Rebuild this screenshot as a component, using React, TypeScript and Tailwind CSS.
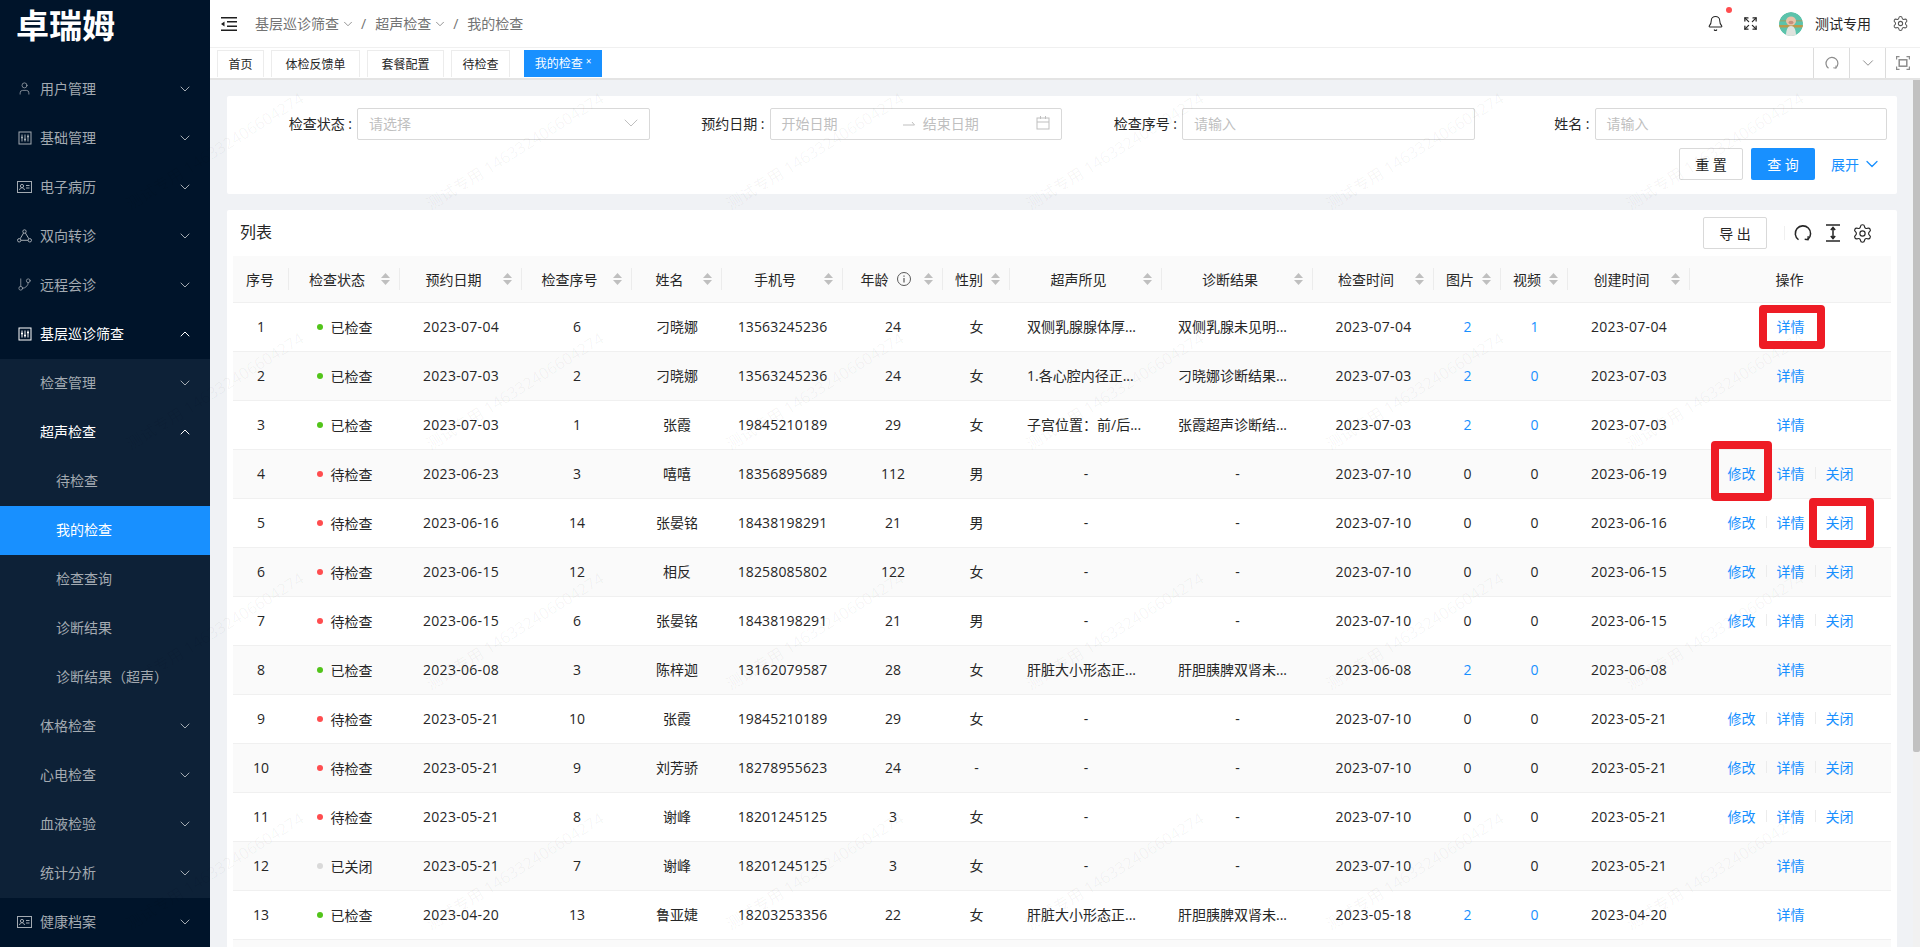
import { Bell, ChevronDown, ChevronUp, Expand, GitBranch, Settings, User } from "lucide-react";

type Row = {
  id: number;
  status: "done" | "wait" | "closed";
  date: string;
  no: number;
  name: string;
  phone: string;
  age: string;
  sex: string;
  finding: string;
  result: string;
  checkTime: string;
  pics: number;
  videos: number;
  created: string;
};

const rows: Row[] = [
  { id: 1, status: "done", date: "2023-07-04", no: 6, name: "刁晓娜", phone: "13563245236", age: "24", sex: "女", finding: "双侧乳腺腺体厚...", result: "双侧乳腺未见明...", checkTime: "2023-07-04", pics: 2, videos: 1, created: "2023-07-04" },
  { id: 2, status: "done", date: "2023-07-03", no: 2, name: "刁晓娜", phone: "13563245236", age: "24", sex: "女", finding: "1.各心腔内径正...", result: "刁晓娜诊断结果...", checkTime: "2023-07-03", pics: 2, videos: 0, created: "2023-07-03" },
  { id: 3, status: "done", date: "2023-07-03", no: 1, name: "张霞", phone: "19845210189", age: "29", sex: "女", finding: "子宫位置：前/后...", result: "张霞超声诊断结...", checkTime: "2023-07-03", pics: 2, videos: 0, created: "2023-07-03" },
  { id: 4, status: "wait", date: "2023-06-23", no: 3, name: "嘻嘻", phone: "18356895689", age: "112", sex: "男", finding: "-", result: "-", checkTime: "2023-07-10", pics: 0, videos: 0, created: "2023-06-19" },
  { id: 5, status: "wait", date: "2023-06-16", no: 14, name: "张晏铭", phone: "18438198291", age: "21", sex: "男", finding: "-", result: "-", checkTime: "2023-07-10", pics: 0, videos: 0, created: "2023-06-16" },
  { id: 6, status: "wait", date: "2023-06-15", no: 12, name: "相反", phone: "18258085802", age: "122", sex: "女", finding: "-", result: "-", checkTime: "2023-07-10", pics: 0, videos: 0, created: "2023-06-15" },
  { id: 7, status: "wait", date: "2023-06-15", no: 6, name: "张晏铭", phone: "18438198291", age: "21", sex: "男", finding: "-", result: "-", checkTime: "2023-07-10", pics: 0, videos: 0, created: "2023-06-15" },
  { id: 8, status: "done", date: "2023-06-08", no: 3, name: "陈梓迦", phone: "13162079587", age: "28", sex: "女", finding: "肝脏大小形态正...", result: "肝胆胰脾双肾未...", checkTime: "2023-06-08", pics: 2, videos: 0, created: "2023-06-08" },
  { id: 9, status: "wait", date: "2023-05-21", no: 10, name: "张霞", phone: "19845210189", age: "29", sex: "女", finding: "-", result: "-", checkTime: "2023-07-10", pics: 0, videos: 0, created: "2023-05-21" },
  { id: 10, status: "wait", date: "2023-05-21", no: 9, name: "刘芳骄", phone: "18278955623", age: "24", sex: "-", finding: "-", result: "-", checkTime: "2023-07-10", pics: 0, videos: 0, created: "2023-05-21" },
  { id: 11, status: "wait", date: "2023-05-21", no: 8, name: "谢峰", phone: "18201245125", age: "3", sex: "女", finding: "-", result: "-", checkTime: "2023-07-10", pics: 0, videos: 0, created: "2023-05-21" },
  { id: 12, status: "closed", date: "2023-05-21", no: 7, name: "谢峰", phone: "18201245125", age: "3", sex: "女", finding: "-", result: "-", checkTime: "2023-07-10", pics: 0, videos: 0, created: "2023-05-21" },
  { id: 13, status: "done", date: "2023-04-20", no: 13, name: "鲁亚婕", phone: "18203253356", age: "22", sex: "女", finding: "肝脏大小形态正...", result: "肝胆胰脾双肾未...", checkTime: "2023-05-18", pics: 2, videos: 0, created: "2023-04-20" },
];

const statusText = { done: "已检查", wait: "待检查", closed: "已关闭" };

function SlidersIcon() {
  return (
    <svg width="14" height="14" viewBox="0 0 14 14" fill="none" stroke="currentColor" strokeWidth="1">
      <rect x="1" y="1" width="12" height="12" />
      <path d="M4 3.5v7M7 3.5v7M10 3.5v7" />
      <path d="M3 6.5h2M6 8.5h2M9 5.5h2" strokeWidth="1.6" />
    </svg>
  );
}

function CardIcon() {
  return (
    <svg width="15" height="12" viewBox="0 0 15 12" fill="none" stroke="currentColor" strokeWidth="1">
      <rect x="0.5" y="0.5" width="14" height="11" />
      <circle cx="5" cy="5" r="1.6" />
      <path d="M2.5 9c.3-1.6 1.3-2.2 2.5-2.2S7.200 7.400 7.500 9M9 4.500h3.500M9 7h3.500" />
    </svg>
  );
}

function NodesIcon() {
  return (
    <svg width="15" height="14" viewBox="0 0 15 14" fill="none" stroke="currentColor" strokeWidth="1">
      <circle cx="7.500" cy="2.500" r="1.700" />
      <circle cx="2.200" cy="11.300" r="1.700" />
      <circle cx="12.800" cy="11.300" r="1.700" />
      <path d="M6.600 4 3.100 9.800M8.400 4l3.500 5.800M3.900 11.300h7.200" />
    </svg>
  );
}

function RefreshIcon({ size }: { size: number }) {
  return (
    <svg width={size} height={size} viewBox="0 0 20 20" fill="none" stroke="currentColor" strokeWidth="1.700">
      <path d="M5 17.500A8.500 8.500 0 1 1 15.500 17" />
      <path d="M15.800 13.500 15.500 17.500l-3.600-.6" strokeWidth="1.500" />
    </svg>
  );
}

function SortIcon() {
  return (
    <svg width="9" height="12" viewBox="0 0 9 12" className="ml-[4px] shrink-0 fill-[#bfbfbf]">
      <path d="M4.500 0 9 5H0z" />
      <path d="M0 7h9l-4.500 5z" />
    </svg>
  );
}

function Pig() {
  return (
    <svg width="24" height="24" viewBox="0 0 24 24" className="rounded-full">
      <circle cx="12" cy="12" r="12" fill="#5cc3ab" />
      <rect x="0" y="13" width="24" height="2.500" fill="#b99a4c" />
      <rect x="0" y="8" width="24" height="1.500" fill="#a89a5c" opacity="0.6" />
      <ellipse cx="12" cy="9" rx="5" ry="4.500" fill="#e8c2a8" />
      <ellipse cx="12" cy="10.500" rx="2.500" ry="1.700" fill="#c78f7c" />
      <path d="M7 24c0-7 2-10 5-10s5 3 5 10z" fill="#dfe3de" />
    </svg>
  );
}

function MenuItem({
  label,
  icon,
  indent,
  arrow,
  active,
  selected,
}: {
  label: string;
  icon?: React.ReactNode;
  indent?: boolean;
  arrow?: "up" | "down";
  active?: boolean;
  selected?: boolean;
}) {
  return (
    <div
      className={`relative flex h-[49px] items-center pb-[2px] pr-[17px] text-[14px] ${indent ? "pl-[56px]" : "pl-[40px]"} ${
        selected ? "bg-[#1890ff] text-white" : active ? "text-white" : "text-[#a3aab1]"
      }`}
    >
      {icon && <span className="absolute left-[17px] flex w-[15px] items-center justify-center">{icon}</span>}
      <span className="flex-1">{label}</span>
      {arrow === "down" && <ChevronDown size={16} strokeWidth={1.500} />}
      {arrow === "up" && <ChevronUp size={16} strokeWidth={1.500} />}
    </div>
  );
}

function Sidebar() {
  return (
    <aside className="flex w-[210px] shrink-0 flex-col bg-[#00142a]">
      <div className="flex h-[65px] items-start pl-[16px] pt-[4px] text-[33px] font-bold leading-[44px] text-white">卓瑞姆</div>
      <MenuItem label="用户管理" arrow="down" icon={<User size={19} strokeWidth={1.200} />} />
      <MenuItem label="基础管理" arrow="down" icon={<SlidersIcon />} />
      <MenuItem label="电子病历" arrow="down" icon={<CardIcon />} />
      <MenuItem label="双向转诊" arrow="down" icon={<NodesIcon />} />
      <MenuItem label="远程会诊" arrow="down" icon={<GitBranch size={17} strokeWidth={1.200} />} />
      <MenuItem active label="基层巡诊筛查" arrow="up" icon={<SlidersIcon />} />
      <div className="bg-[#0d2137]">
        <MenuItem label="检查管理" arrow="down" />
        <MenuItem active label="超声检查" arrow="up" />
        <MenuItem indent label="待检查" />
        <MenuItem indent selected label="我的检查" />
        <MenuItem indent label="检查查询" />
        <MenuItem indent label="诊断结果" />
        <MenuItem indent label="诊断结果（超声）" />
        <MenuItem label="体格检查" arrow="down" />
        <MenuItem label="心电检查" arrow="down" />
        <MenuItem label="血液检验" arrow="down" />
        <MenuItem label="统计分析" arrow="down" />
      </div>
      <MenuItem label="健康档案" arrow="down" icon={<CardIcon />} />
    </aside>
  );
}

function Header() {
  return (
    <header className="flex h-[48px] shrink-0 items-center border-b border-[#f0f0f0] bg-white pl-[11px] pr-[11px]">
      <svg width="16" height="14" viewBox="0 0 16 14" className="fill-[#1f1f1f]">
        <rect x="0" y="0" width="16" height="1.500" />
        <rect x="6" y="4" width="10" height="1.500" />
        <rect x="6" y="8.500" width="10" height="1.500" />
        <rect x="0" y="12.500" width="16" height="1.500" />
        <path d="M0 7l3.500-2.500v5z" />
      </svg>
      <nav className="ml-[18px] flex items-center text-[14px] text-[#737373]">
        <span>基层巡诊筛查</span>
        <ChevronDown size={14} strokeWidth={1.300} className="ml-[2px]" />
        <span className="ml-[6px] mr-[9px]">/</span>
        <span>超声检查</span>
        <ChevronDown size={14} strokeWidth={1.300} className="ml-[2px]" />
        <span className="ml-[6px] mr-[9px]">/</span>
        <span>我的检查</span>
      </nav>
      <div className="ml-auto flex items-center text-[#262626]">
        <span className="relative flex">
          <Bell size={17} strokeWidth={1.500} />
          <span className="absolute left-[19px] top-[-8px] h-[6px] w-[6px] rounded-full bg-[#ff4d4f]" />
        </span>
        <Expand size={15} strokeWidth={2} className="ml-[19px]" />
        <span className="ml-[21px] flex">
          <Pig />
        </span>
        <span className="ml-[12px] text-[14px]">测试专用</span>
        <Settings size={17} strokeWidth={1.500} className="ml-[21px] text-[#595959]" />
      </div>
    </header>
  );
}

function Tab({ label, width }: { label: string; width: string }) {
  return (
    <div className={`flex h-[27px] items-center justify-center border border-b-0 border-[#ececec] pt-[1px] text-[12px] text-[#262626] ${width}`}>
      {label}
    </div>
  );
}

function Tabs() {
  return (
    <div className="flex h-[32px] shrink-0 items-end border-b-2 border-[#e4e4e4] bg-white pl-[7px]">
      <div className="flex gap-[7px] pb-[1px]">
        <Tab label="首页" width="w-[47px]" />
        <Tab label="体检反馈单" width="w-[89px]" />
        <Tab label="套餐配置" width="w-[77px]" />
        <Tab label="待检查" width="w-[59px]" />
        <div className="ml-[7px] flex h-[27px] w-[78px] items-center justify-center bg-[#1890ff] pt-[1px] text-[12px] text-white">
          我的检查<span className="ml-[3px] mt-[-6px] text-[10px] leading-none">×</span>
        </div>
      </div>
      <div className="ml-auto flex h-full text-[#8c8c8c]">
        <div className="flex w-[36px] items-center justify-center border-l border-[#dcdcdc]">
          <RefreshIcon size={14} />
        </div>
        <div className="flex w-[36px] items-center justify-center border-l border-[#dcdcdc]">
          <ChevronDown size={18} strokeWidth={1.300} />
        </div>
        <div className="flex w-[35px] items-center justify-center border-l border-[#dcdcdc]">
          <svg width="14" height="14" viewBox="0 0 14 14" fill="none" stroke="currentColor" strokeWidth="1.200">
            <path d="M.6 3.500V.6h2.900M10.500.6h2.900v2.900M13.400 10.500v2.900h-2.900M3.500 13.400H.6v-2.900" />
            <rect x="3.200" y="3.800" width="7.600" height="6.400" strokeWidth="1.500" />
          </svg>
        </div>
      </div>
    </div>
  );
}

function Field({ label, children }: { label: string; children: React.ReactNode }) {
  return (
    <div className="flex items-center">
      <label className="w-[120px] shrink-0 pb-[2px] pr-[5px] text-right text-[14px] text-[#262626]">{label} :</label>
      <div className="flex h-[32px] flex-1 items-center rounded-[2px] border border-[#d9d9d9] bg-white px-[11px] pb-[2px] text-[14px] text-[#bfbfbf]">
        {children}
      </div>
    </div>
  );
}

function SearchCard() {
  return (
    <section className="h-[98px] shrink-0 rounded-[2px] bg-white px-[10px] pt-[12px]">
      <div className="grid grid-cols-4">
        <Field label="检查状态">
          <span className="flex-1">请选择</span>
          <ChevronDown size={24} strokeWidth={1} className="mr-[-5px]" />
        </Field>
        <Field label="预约日期">
          <span className="flex-1">开始日期</span>
          <svg width="12" height="6" viewBox="0 0 12 6" fill="none" stroke="currentColor" className="mx-[8px]">
            <path d="M0 5h11.500L9 2" />
          </svg>
          <span className="flex-1">结束日期</span>
          <svg width="14" height="14" viewBox="0 0 14 14" fill="none" stroke="currentColor">
            <rect x="1" y="2" width="12" height="11" />
            <path d="M1 6h12M4.500 0v3M9.500 0v3" />
          </svg>
        </Field>
        <Field label="检查序号">
          <span>请输入</span>
        </Field>
        <Field label="姓名">
          <span>请输入</span>
        </Field>
      </div>
      <div className="mt-[8px] flex items-center justify-end pr-[5px]">
        <button className="h-[32px] w-[64px] rounded-[2px] border border-[#d9d9d9] bg-white text-[14px] text-[#262626]">重 置</button>
        <button className="ml-[8px] h-[32px] w-[64px] rounded-[2px] bg-[#1890ff] text-[14px] text-white">查 询</button>
        <span className="ml-[16px] flex items-center text-[14px] text-[#1890ff]">
          展开
          <ChevronDown size={20} strokeWidth={1.500} className="ml-[3px]" />
        </span>
      </div>
    </section>
  );
}

const columns = [
  { label: "序号", width: "w-[56px]" },
  { label: "检查状态", width: "w-[111px]", sort: true },
  { label: "预约日期", width: "w-[122px]", sort: true },
  { label: "检查序号", width: "w-[110px]", sort: true },
  { label: "姓名", width: "w-[90px]", sort: true },
  { label: "手机号", width: "w-[121px]", sort: true },
  { label: "年龄", width: "w-[100px]", sort: true, info: true },
  { label: "性别", width: "w-[67px]", sort: true },
  { label: "超声所见", width: "w-[152px]", sort: true },
  { label: "诊断结果", width: "w-[151px]", sort: true },
  { label: "检查时间", width: "w-[121px]", sort: true },
  { label: "图片", width: "w-[67px]", sort: true },
  { label: "视频", width: "w-[67px]", sort: true },
  { label: "创建时间", width: "w-[122px]", sort: true },
  { label: "操作", width: "w-[201px]" },
];

const cell = "h-[49px] border-b border-[#f0f0f0] p-0 pb-[2px] text-center text-[14px] font-normal";

function Actions({ status }: { status: Row["status"] }) {
  if (status !== "wait") return <span className="text-[#1890ff]">详情</span>;
  return (
    <span className="flex items-center justify-center text-[#1890ff]">
      修改
      <i className="mx-[10px] h-[12px] w-px bg-[#ececec]" />
      详情
      <i className="mx-[10px] h-[12px] w-px bg-[#ececec]" />
      关闭
    </span>
  );
}

function DataTable() {
  return (
    <table className="w-[1658px] table-fixed border-separate border-spacing-0 text-[#262626]">
      <colgroup>
        {columns.map((c) => (
          <col key={c.label} className={c.width} />
        ))}
      </colgroup>
      <thead>
        <tr>
          {columns.map((c, i) => (
            <th key={c.label} className="relative h-[47px] border-b border-[#f0f0f0] bg-[#fafafa] p-0 pl-[8px] pr-[10px] text-[14px] font-normal">
              <div className="flex items-center justify-center">
                <span className="flex flex-1 items-center justify-center">
                  {c.label}
                  {c.info && (
                    <svg width="14" height="14" viewBox="0 0 14 14" fill="none" stroke="#595959" className="ml-[8px]">
                      <circle cx="7" cy="7" r="6.500" />
                      <path d="M7 6v4.500M7 3.500v1.300" strokeWidth="1.200" />
                    </svg>
                  )}
                </span>
                {c.sort && <SortIcon />}
              </div>
              {i < columns.length - 1 && <span className="absolute right-0 top-[12px] h-[22px] w-px bg-[#ececec]" />}
            </th>
          ))}
        </tr>
      </thead>
      <tbody>
        {rows.map((r) => {
          const bg = r.id % 2 === 0 ? "bg-[#fafafa]" : "bg-white";
          const media = r.pics > 0 ? "text-[#1890ff]" : "";
          return (
            <tr key={r.id} className={bg}>
              <td className={cell}>{r.id}</td>
              <td className={cell}>
                <span className="inline-flex items-center">
                  <i
                    className={`mr-[8px] h-[6px] w-[6px] rounded-full ${
                      r.status === "done" ? "bg-[#52c41a]" : r.status === "wait" ? "bg-[#ff4d4f]" : "bg-[#d9d9d9]"
                    }`}
                  />
                  {statusText[r.status]}
                </span>
              </td>
              <td className={`${cell} tracking-[0.3px]`}>{r.date}</td>
              <td className={cell}>{r.no}</td>
              <td className={cell}>{r.name}</td>
              <td className={`${cell} tracking-[0.15px]`}>{r.phone}</td>
              <td className={cell}>{r.age}</td>
              <td className={cell}>{r.sex}</td>
              <td className={r.finding === "-" ? cell : `${cell} !pl-[17px] !text-left`}>{r.finding}</td>
              <td className={r.result === "-" ? cell : `${cell} !pl-[16px] !text-left`}>{r.result}</td>
              <td className={`${cell} tracking-[0.3px]`}>{r.checkTime}</td>
              <td className={`${cell} ${media}`}>{r.pics}</td>
              <td className={`${cell} ${media}`}>{r.videos}</td>
              <td className={`${cell} tracking-[0.3px]`}>{r.created}</td>
              <td className={cell}>
                <Actions status={r.status} />
              </td>
            </tr>
          );
        })}
        <tr className="bg-[#fafafa]">
          <td className={cell} colSpan={15} />
        </tr>
      </tbody>
    </table>
  );
}

function ListCard() {
  return (
    <section className="shrink-0 rounded-[2px] bg-white px-[6px]">
      <div className="flex h-[46px] items-center pl-[7px] pr-[18px]">
        <h2 className="pb-[2px] text-[16px] font-normal text-[#262626]">列表</h2>
        <button className="ml-auto h-[32px] w-[64px] rounded-[2px] border border-[#d9d9d9] bg-white text-[14px] text-[#262626]">导 出</button>
        <i className="ml-[17px] h-[14px] w-px bg-[#f0f0f0]" />
        <span className="ml-[9px] flex text-[#262626]">
          <RefreshIcon size={18} />
        </span>
        <svg width="16" height="18" viewBox="0 0 16 18" fill="none" stroke="#262626" strokeWidth="1.500" className="ml-[13px]">
          <path d="M1 1h14M1 17h14M8 3.500v11M5.800 6 8 3.500 10.200 6M5.800 12 8 14.500l2.200-2.500" />
        </svg>
        <Settings size={21} strokeWidth={1.300} className="ml-[11px] text-[#262626]" />
      </div>
      <DataTable />
    </section>
  );
}

function Watermark() {
  const tiles = Array.from({ length: 24 }, (_, i) => i);
  return (
    <div className="pointer-events-none absolute left-[65px] top-[31px] grid grid-cols-[repeat(6,300px)] auto-rows-[240px]">
      {tiles.map((i) => (
        <div key={i} className="flex items-center justify-center">
          <span className="-rotate-[32deg] whitespace-nowrap text-[16px] text-black/[0.045]">测试专用 146332406604274</span>
        </div>
      ))}
    </div>
  );
}

export default function App() {
  return (
    <div className="relative flex h-[947px] w-full overflow-hidden bg-[#f0f2f5] font-['Open_Sans','Noto_Sans_CJK_SC',sans-serif]">
      <Sidebar />
      <main className="flex min-w-0 flex-1 flex-col">
        <Header />
        <Tabs />
        <div className="flex min-h-0 flex-1">
          <div className="flex min-w-0 flex-1 flex-col gap-[16px] overflow-hidden pl-[17px] pr-[16px] pt-[16px]">
            <SearchCard />
            <ListCard />
          </div>
          <div className="w-[7px] shrink-0 bg-[#f1f1f1]">
            <div className="h-[672px] rounded-b-[2px] bg-[#c1c1c1]" />
          </div>
        </div>
      </main>
      <Watermark />
      <i className="absolute left-[1759px] top-[305px] h-[44px] w-[66px] rounded-[4px] border-[8px] border-[#ee1c25]" />
      <i className="absolute left-[1711px] top-[441px] h-[60px] w-[61px] rounded-[4px] border-[8px] border-[#ee1c25]" />
      <i className="absolute left-[1809px] top-[498px] h-[50px] w-[65px] rounded-[4px] border-[8px] border-[#ee1c25]" />
    </div>
  );
}
